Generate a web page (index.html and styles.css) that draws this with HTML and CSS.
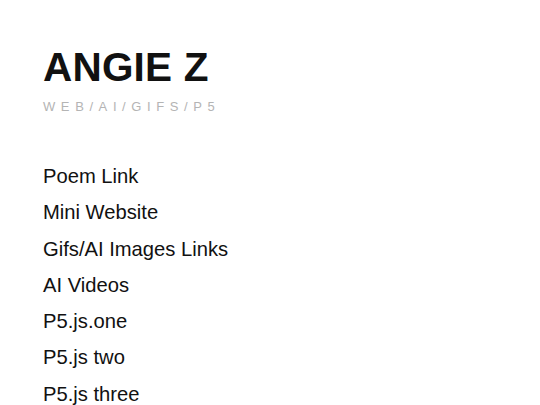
FILE: index.html
```html
<!DOCTYPE html>
<html lang="en">
<head>
  <meta charset="UTF-8">
  <meta name="viewport" content="width=device-width, initial-scale=1.0">
  <title>Angie Z</title>
  <link rel="stylesheet" href="styles.css">
</head>
<body>
  <header class="header">
    <h1>ANGIE Z</h1>
    <p class="tagline">WEB/AI/GIFS/P5</p>
  </header>
  <ul class="links">
    <li><a href="#">Poem Link</a></li>
    <li><a href="#">Mini Website</a></li>
    <li><a href="#">Gifs/AI Images Links</a></li>
    <li><a href="#">AI Videos</a></li>
    <li><a href="#">P5.js.one</a></li>
    <li><a href="#">P5.js two</a></li>
    <li><a href="#">P5.js three</a></li>
  </ul>
</body>
</html>
```

FILE: styles.css
```css
* { box-sizing: border-box; }
body {
  margin: 0;
  padding: 44px 43px;
  font-family: "Liberation Sans", Arial, sans-serif;
  background: #fff;
  color: #111;
}
.header h1 {
  margin: 0;
  font-size: 40.5px;
  line-height: 46px;
  font-weight: bold;
  letter-spacing: 0.2px;
}
.tagline {
  margin: 9px 0 0;
  font-size: 13px;
  letter-spacing: 5.6px;
  color: #b4b4b4;
}
.links {
  list-style: none;
  margin: 44px 0 0;
  padding: 0;
}
.links li {
  font-size: 20.2px;
  line-height: 36.3px;
}
.links a {
  color: #111;
  text-decoration: none;
}
```
